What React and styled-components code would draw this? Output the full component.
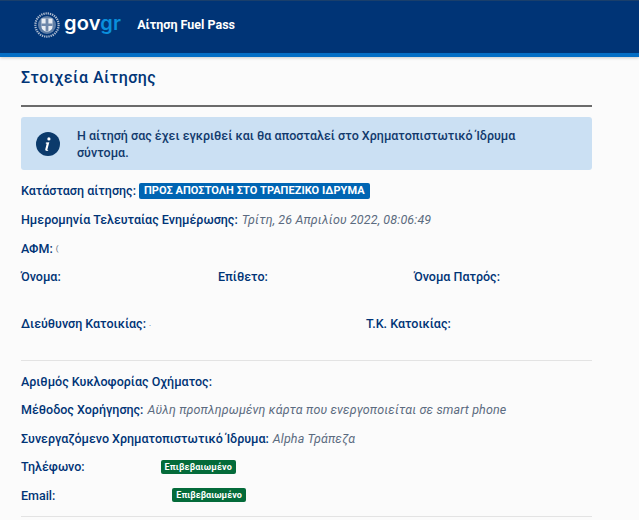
import React from 'react'
import styled, { createGlobalStyle } from 'styled-components'

const GlobalStyle = createGlobalStyle`
  html, body {
    margin: 0;
    padding: 0;
    background: #fbfbfb;
    height: 520px;
    overflow: hidden;
  }
  * { box-sizing: border-box; }
`

const Page = styled.div`
  width: 639px;
  height: 520px;
  overflow: hidden;
  font-family: Roboto, "Noto Sans", sans-serif;
  font-size: 12.5px;
  color: #123a6d;
`

const Header = styled.header`
  height: 57px;
  background: #003476;
  border-top: 1px solid #1a3f6b;
  border-bottom: 4px solid #046ec5;
  box-shadow: 0 1px 3px rgba(0, 0, 0, .2);
  display: flex;
  align-items: center;
  padding: 0 0 5px 34px;
`

const Brand = styled.div`
  display: flex;
  align-items: center;
  gap: 4px;
`

const Wordmark = styled.span`
  font-family: Inter, "Open Sans", sans-serif;
  font-weight: 600;
  font-size: 20px;
  letter-spacing: .2px;
  line-height: 1;
  color: #fff;
  padding-bottom: 4px;

  em {
    font-style: normal;
    color: #0a8fdc;
  }
`

const AppName = styled.span`
  margin-left: 16px;
  color: #fff;
  font-weight: 700;
  font-size: 12.5px;
`

const Content = styled.main`
  padding: 11px 47px 0 21px;
`

const Title = styled.h1`
  margin: 0;
  font-size: 16px;
  line-height: 20px;
  font-weight: 500;
  letter-spacing: .5px;
  color: #003476;
`

const Rule = styled.hr`
  margin: 17px 0 10px;
  border: 0;
  height: 2px;
  background: #6b6b6b;
`

const Alert = styled.div`
  height: 53px;
  background: #cbe0f3;
  border-radius: 3px;
  display: flex;
  align-items: center;
  gap: 17px;
  padding: 0 50px 0 15px;
  font-weight: 500;
  font-size: 12.5px;
  line-height: 17px;
  color: #123a6d;
`

const InfoIcon = styled.svg`
  width: 24px;
  height: 24px;
  flex: none;
`

const Row = styled.div`
  display: flex;
  align-items: center;
  height: ${p => p.$height || 29}px;
`

const Label = styled.span`
  font-weight: 500;
  color: #003476;
  white-space: pre;
`

const Value = styled.span`
  margin-left: 4px;
  font-style: italic;
  letter-spacing: .13px;
  color: #5b6b80;
`

const StatusBadge = styled.span`
  margin-left: 3px;
  padding: 0 5px;
  height: 16px;
  line-height: 16px;
  border-radius: 2px;
  background: #0065b3;
  color: #fff;
  font-size: 11px;
  font-weight: 700;
  letter-spacing: .05px;
`

const ConfirmBadge = styled.span`
  margin-left: ${p => p.$offset}px;
  padding: 0 4px;
  height: 14px;
  line-height: 14px;
  border-radius: 2px;
  background: #046b3a;
  color: #fff;
  font-size: 9px;
  font-weight: 700;
  letter-spacing: ${p => p.$tight ? 0 : '.15px'};
`

const Mark = styled.span`
  margin-left: 3px;
  font-size: 8px;
  color: #5b6b80;
`

const Columns = styled.div`
  display: grid;
  grid-template-columns: ${p => p.$columns};
  height: ${p => p.$height}px;
  margin-top: ${p => p.$top || 0}px;
`

const Section = styled.div`
  margin-top: ${p => p.$top}px;
`

const Divider = styled.hr`
  margin: ${p => p.$margin};
  border: 0;
  height: 1px;
  background: #e3e3e3;
`

const Emblem = () => (
  <svg width="26" height="26" viewBox="0 0 26 26" aria-hidden="true">
    <circle cx="13" cy="13" r="11.6" fill="none" stroke="#aebcd0" strokeWidth="2.2" strokeDasharray="1.3 .9" />
    <circle cx="13" cy="13" r="9" fill="#5f7ea6" />
    <path d="M7.500 6.500h11v8.500c0 2.600-2.400 4-5.500 5-3.100-1-5.500-2.400-5.500-5z" fill="#e9edf3" />
    <path d="M11.600 6.500h2.800v13h-2.800zM7.500 11.500h11v2.600h-11z" fill="#6f88aa" />
  </svg>
)

const App = () => (
  <Page>
    <GlobalStyle />
    <Header>
      <Brand>
        <Emblem />
        <Wordmark>gov<em>gr</em></Wordmark>
      </Brand>
      <AppName>Αίτηση Fuel Pass</AppName>
    </Header>
    <Content>
      <Title>Στοιχεία Αίτησης</Title>
      <Rule />
      <Alert>
        <InfoIcon viewBox="0 0 24 24" aria-hidden="true">
          <circle cx="12" cy="12" r="12" fill="#0b3a6b" />
          <circle cx="12.900" cy="6.900" r="1.600" fill="#fff" />
          <path d="M13.300 10.200l-1.900 7.200c-.1.500.2.600.9.500l-.3.900c-1.900.3-3-.2-2.700-1.500l1.300-5.300c.1-.5-.2-.7-.9-.6l.2-.8z" fill="#fff" />
        </InfoIcon>
        <span>Η αίτησή σας έχει εγκριθεί και θα αποσταλεί στο Χρηματοπιστωτικό Ίδρυμα σύντομα.</span>
      </Alert>
      <Section $top={6}>
        <Row><Label>Κατάσταση αίτησης:</Label><StatusBadge>ΠΡΟΣ ΑΠΟΣΤΟΛΗ ΣΤΟ ΤΡΑΠΕΖΙΚΟ ΙΔΡΥΜΑ</StatusBadge></Row>
        <Row><Label>Ημερομηνία Τελευταίας Ενημέρωσης:</Label><Value>Τρίτη, 26 Απριλίου 2022, 08:06:49</Value></Row>
        <Row><Label>ΑΦΜ:</Label><Mark>(</Mark></Row>
        <Columns $columns="197px 196px 1fr" $height={47} $top={-1}>
          <Row><Label>Όνομα:</Label></Row>
          <Row><Label>Επίθετο:</Label></Row>
          <Row><Label>Όνομα Πατρός:</Label></Row>
        </Columns>
        <Columns $columns="345px 1fr" $height={51}>
          <Row><Label>Διεύθυνση Κατοικίας:</Label><Mark>.</Mark></Row>
          <Row><Label>Τ.Κ. Κατοικίας:</Label></Row>
        </Columns>
      </Section>
      <Divider $margin="0 0 6px" />
      <Row $height={28.5}><Label>Αριθμός Κυκλοφορίας Οχήματος:</Label></Row>
      <Row $height={28.5}><Label>Μέθοδος Χορήγησης:</Label><Value>Αϋλη προπληρωμένη κάρτα που ενεργοποιείται σε smart phone</Value></Row>
      <Row $height={28.5}><Label>Συνεργαζόμενο Χρηματοπιστωτικό Ίδρυμα:</Label><Value>Alpha Τράπεζα</Value></Row>
      <Row $height={28.5}><Label>Τηλέφωνο:</Label><ConfirmBadge $offset={76}>Επιβεβαιωμένο</ConfirmBadge></Row>
      <Row $height={28.5}><Label>Email:</Label><ConfirmBadge $offset={117} $tight>Επιβεβαιωμένο</ConfirmBadge></Row>
      <Divider $margin="6px 0 0" />
    </Content>
  </Page>
)

export default App
